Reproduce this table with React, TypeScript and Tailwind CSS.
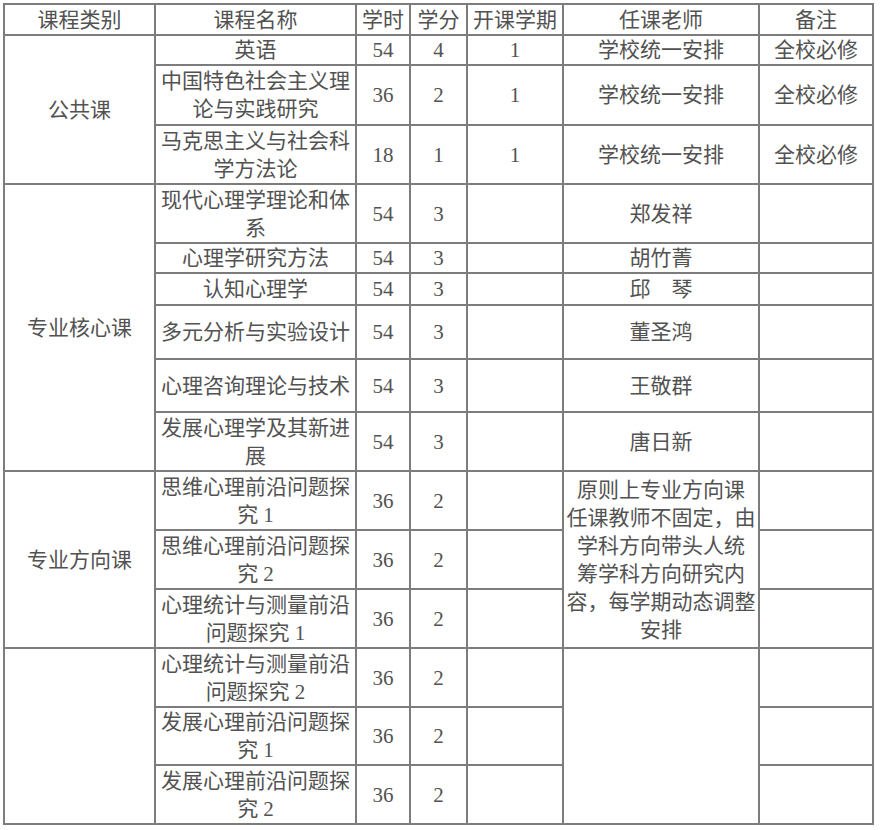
import React from "react";

type Row = {
  h: number;
  cat?: { t: string; span: number };
  name: string[];
  hours: string;
  credit: string;
  term: string;
  teacher?: { t: string[]; span: number };
  note: string;
};

const rows: Row[] = [
  { h: 29, cat: { t: "公共课", span: 3 }, name: ["英语"], hours: "54", credit: "4", term: "1", teacher: { t: ["学校统一安排"], span: 1 }, note: "全校必修" },
  { h: 60, name: ["中国特色社会主义理", "论与实践研究"], hours: "36", credit: "2", term: "1", teacher: { t: ["学校统一安排"], span: 1 }, note: "全校必修" },
  { h: 59, name: ["马克思主义与社会科", "学方法论"], hours: "18", credit: "1", term: "1", teacher: { t: ["学校统一安排"], span: 1 }, note: "全校必修" },
  { h: 59, cat: { t: "专业核心课", span: 6 }, name: ["现代心理学理论和体", "系"], hours: "54", credit: "3", term: "", teacher: { t: ["郑发祥"], span: 1 }, note: "" },
  { h: 30, name: ["心理学研究方法"], hours: "54", credit: "3", term: "", teacher: { t: ["胡竹菁"], span: 1 }, note: "" },
  { h: 32, name: ["认知心理学"], hours: "54", credit: "3", term: "", teacher: { t: ["邱　琴"], span: 1 }, note: "" },
  { h: 54, name: ["多元分析与实验设计"], hours: "54", credit: "3", term: "", teacher: { t: ["董圣鸿"], span: 1 }, note: "" },
  { h: 53, name: ["心理咨询理论与技术"], hours: "54", credit: "3", term: "", teacher: { t: ["王敬群"], span: 1 }, note: "" },
  { h: 59, name: ["发展心理学及其新进", "展"], hours: "54", credit: "3", term: "", teacher: { t: ["唐日新"], span: 1 }, note: "" },
  {
    h: 59,
    cat: { t: "专业方向课", span: 3 },
    name: ["思维心理前沿问题探", "究 1"],
    hours: "36",
    credit: "2",
    term: "",
    teacher: {
      t: ["原则上专业方向课", "任课教师不固定，由", "学科方向带头人统", "筹学科方向研究内", "容，每学期动态调整", "安排"],
      span: 3,
    },
    note: "",
  },
  { h: 59, name: ["思维心理前沿问题探", "究 2"], hours: "36", credit: "2", term: "", note: "" },
  { h: 59, name: ["心理统计与测量前沿", "问题探究 1"], hours: "36", credit: "2", term: "", note: "" },
  { h: 59, cat: { t: "", span: 3 }, name: ["心理统计与测量前沿", "问题探究 2"], hours: "36", credit: "2", term: "", teacher: { t: [], span: 3 }, note: "" },
  { h: 58, name: ["发展心理前沿问题探", "究 1"], hours: "36", credit: "2", term: "", note: "" },
  { h: 59, name: ["发展心理前沿问题探", "究 2"], hours: "36", credit: "2", term: "", note: "" },
];

const cell = "border-2 border-[#7c7c7c] p-0 text-center align-middle";

function Lines({ lines }: { lines: string[] }) {
  return (
    <>
      {lines.map((l, i) => (
        <div key={i} className="whitespace-nowrap">
          {l}
        </div>
      ))}
    </>
  );
}

export default function App() {
  return (
    <div className="bg-white w-[880px] h-[830px] pl-[3px] pt-[3px]">
      <table
        className="table-fixed border-collapse w-[871px] text-[21px] leading-[28px] text-[#525252]"
        style={{ fontFamily: '"Liberation Serif", "Noto Sans CJK SC", serif' }}
      >
        <colgroup>
          <col className="w-[151px]" />
          <col className="w-[201px]" />
          <col className="w-[54px]" />
          <col className="w-[57px]" />
          <col className="w-[96px]" />
          <col className="w-[196px]" />
          <col className="w-[114px]" />
        </colgroup>
        <thead>
          <tr className="h-[31px]">
            <th className={`${cell} font-normal`}>课程类别</th>
            <th className={`${cell} font-normal`}>课程名称</th>
            <th className={`${cell} font-normal`}>学时</th>
            <th className={`${cell} font-normal`}>学分</th>
            <th className={`${cell} font-normal`}>开课学期</th>
            <th className={`${cell} font-normal`}>任课老师</th>
            <th className={`${cell} font-normal`}>备注</th>
          </tr>
        </thead>
        <tbody>
          {rows.map((r, i) => (
            <tr key={i} style={{ height: r.h }}>
              {r.cat && (
                <td rowSpan={r.cat.span} className={cell}>
                  {r.cat.t}
                </td>
              )}
              <td className={cell}>
                <Lines lines={r.name} />
              </td>
              <td className={cell}>{r.hours}</td>
              <td className={cell}>{r.credit}</td>
              <td className={cell}>{r.term}</td>
              {r.teacher && (
                <td rowSpan={r.teacher.span} className={cell}>
                  <Lines lines={r.teacher.t} />
                </td>
              )}
              <td className={cell}>{r.note}</td>
            </tr>
          ))}
        </tbody>
      </table>
    </div>
  );
}
